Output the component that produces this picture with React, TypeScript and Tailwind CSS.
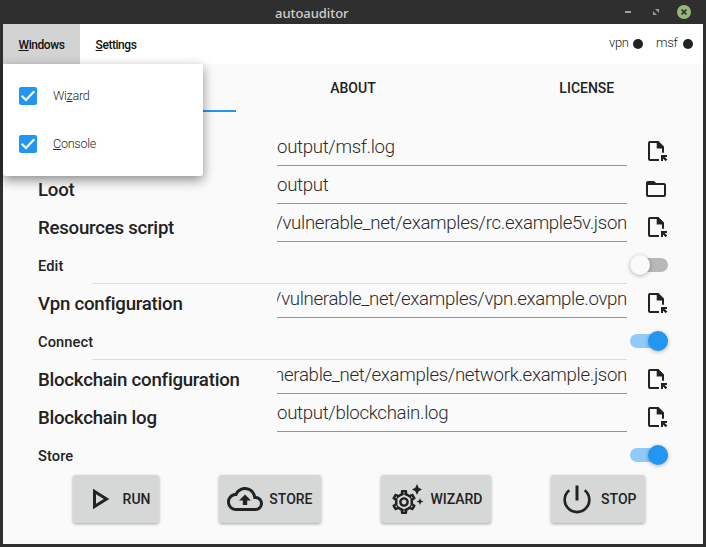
import type { ReactNode } from "react";
import { MdOutlineSettings } from "react-icons/md";

const INK = "#222222";

function FileIcon() {
  return (
    <svg width="24" height="24" viewBox="0 0 24 24" fill="none" aria-hidden="true">
      <path d="M15 21H6Q5 21 5 20V4Q5 3 6 3H14" stroke={INK} strokeWidth="2" />
      <path d="M12.700 2H14.500L20 7.500V13.700H18V9.500H12.700Z" fill={INK} />
      <path d="M17 16H23V18H20.700L23.300 20.600L21.700 22.200L19 19.600V22H17Z" fill={INK} />
    </svg>
  );
}

function FolderIcon() {
  return (
    <svg width="24" height="24" viewBox="0 0 24 24" aria-hidden="true">
      <path
        fill={INK}
        d="M20 6h-8l-2-2H4c-1.100 0-1.990.9-1.990 2L2 18c0 1.100.9 2 2 2h16c1.100 0 2-.9 2-2V8c0-1.100-.9-2-2-2zm0 12H4V8h16v10z"
      />
    </svg>
  );
}

function Toggle({ on }: { on: boolean }) {
  return (
    <div className={`flex h-[14px] w-[38px] items-center rounded-full ${on ? "justify-end bg-[#90caf9]" : "bg-[#b8b8b8]"}`}>
      <div
        className={`size-5 rounded-full shadow-[0_1px_4px_rgba(0,0,0,0.3)] ${on ? "bg-[#2196f3]" : "bg-[#fafafa]"}`}
      />
    </div>
  );
}

function Field({ label, value, end, folder }: { label: string; value: string; end?: boolean; folder?: boolean }) {
  return (
    <div className="flex h-[38px] shrink-0">
      <div className="w-[239px] pt-px text-[18.67px] leading-[38px] font-medium tracking-[-0.25px] whitespace-nowrap">
        {label}
      </div>
      <div
        className={`flex h-[34px] w-[350px] overflow-hidden border-b border-[#949494] text-[18.67px] leading-[31px] font-light tracking-[-0.33px] whitespace-nowrap text-[#2a2a2a] ${end ? "justify-end" : ""}`}
      >
        <span>{value}</span>
      </div>
      <div className="ml-[17px] flex items-center">{folder ? <FolderIcon /> : <FileIcon />}</div>
    </div>
  );
}

function SwitchRow({ label, on, divider }: { label: string; on: boolean; divider?: boolean }) {
  return (
    <div className="flex h-[38px] shrink-0">
      <div className="w-[54px] pt-px text-[14.67px] leading-[38px] font-medium tracking-[0.1px] whitespace-nowrap">{label}</div>
      <div className={`w-[535px] ${divider ? "border-b border-[#dcdcdc]" : ""}`} />
      <div className="ml-[3px] flex items-center">
        <Toggle on={on} />
      </div>
    </div>
  );
}

function ActionButton({ className, label, children }: { className: string; label: string; children: ReactNode }) {
  return (
    <button
      className={`flex h-12 shrink-0 items-center justify-between rounded-[3px] bg-[#d6d8d7] pr-[8.5px] pl-2 text-[14px] font-medium shadow-[0_1px_3px_rgba(0,0,0,0.35)] ${className}`}
    >
      {children}
      <span className="pt-px">{label}</span>
    </button>
  );
}

function MenuCheck({ children }: { children: ReactNode }) {
  return (
    <div className="flex h-12 items-center gap-4 pl-4 text-[12.67px] font-light tracking-[-0.3px] text-[#2a2a2a]">
      <div className="flex size-[18px] items-center justify-center rounded-[2px] bg-[#2196f3]">
        <svg width="18" height="18" viewBox="0 0 18 18" fill="none" aria-hidden="true">
          <path d="M2.700 8.700L7 13L15.300 4.200" stroke="#fff" strokeWidth="2.200" />
        </svg>
      </div>
      <span className="pb-[2px]">{children}</span>
    </div>
  );
}

function Key({ children }: { children: ReactNode }) {
  return <span className="underline decoration-1 underline-offset-1">{children}</span>;
}

export default function App() {
  return (
    <div className="flex h-[547px] w-[706px] flex-col bg-[#2f2f2f] px-[3px] pb-[3px] font-[Roboto,'Noto_Sans',sans-serif] text-[#222222]">
      <header className="flex h-6 shrink-0 items-center">
        <span className="mt-[3px] ml-[272px] font-['Noto_Sans',sans-serif] text-[13px] font-medium tracking-[-0.05px] text-[#cfcfcf]">
          autoauditor
        </span>
        <div className="mr-[12px] ml-auto flex items-center">
          <div className="mr-[22px] h-[2px] w-[6px] bg-[#a0a0a0]" />
          <svg className="mr-[18px]" width="6" height="6" viewBox="0 0 6 6" aria-hidden="true">
            <path d="M2 0H6V4ZM0 2V6H4Z" fill="#999" />
          </svg>
          <svg width="14" height="14" viewBox="0 0 14 14" aria-hidden="true">
            <circle cx="7" cy="7" r="7" fill="#98b877" />
            <path d="M4.500 4.500L9.500 9.500M9.500 4.500L4.500 9.500" stroke="#2f2f2f" strokeWidth="1.700" />
          </svg>
        </div>
      </header>

      <nav className="relative flex h-10 shrink-0 bg-white text-[12px] font-normal tracking-[-0.3px] text-[#111]">
        <div className="flex w-[77px] items-center justify-center bg-[#d3d3d3]">
          <span className="pt-px font-medium tracking-[-0.45px]"><Key>W</Key>indows</span>
        </div>
        <div className="flex w-[72px] items-center justify-center">
          <span className="pt-px font-medium tracking-[-0.45px]"><Key>S</Key>ettings</span>
        </div>
        <div className="ml-auto flex items-center pr-[10px] text-[13px] font-light text-[#222]">
          <span className="mb-[3px] w-[24px]">vpn</span>
          <span className="size-[10px] rounded-full bg-[#222]" />
          <span className="mb-[3px] ml-[13px] w-[27px]">msf</span>
          <span className="size-[10px] rounded-full bg-[#222]" />
        </div>
        <div className="absolute top-10 left-0 z-10 h-28 w-[200px] rounded-b-[3px] bg-white py-2 shadow-[0_4px_12px_rgba(0,0,0,0.45)]">
          <MenuCheck>Wi<Key>z</Key>ard</MenuCheck>
          <MenuCheck><Key>C</Key>onsole</MenuCheck>
        </div>
      </nav>

      <main className="flex flex-1 flex-col bg-[#fafafa]">
        <div className="grid h-12 shrink-0 grid-cols-3 text-center text-[14px] leading-[49px] font-medium">
          <div className="h-12 border-b-2 border-[#2196f3]" />
          <div className="h-12">ABOUT</div>
          <div className="h-12 pl-px">LICENSE</div>
        </div>

        <section className="mt-5 flex flex-col pl-[35px]">
          <Field label="" value="output/msf.log" />
          <Field label="Loot" value="output" folder />
          <Field label="Resources script" value="/vulnerable_net/examples/rc.example5v.json" end />
          <SwitchRow label="Edit" on={false} divider />
          <Field label="Vpn configuration" value="/vulnerable_net/examples/vpn.example.ovpn" end />
          <SwitchRow label="Connect" on divider />
          <Field label="Blockchain configuration" value="vulnerable_net/examples/network.example.json" end />
          <Field label="Blockchain log" value="output/blockchain.log" />
          <SwitchRow label="Store" on />
        </section>

        <footer className="mt-px flex pl-[70px]">
          <ActionButton className="w-[86px]" label="RUN">
            <svg width="36" height="36" viewBox="0 0 36 36" fill="none" aria-hidden="true">
              <path d="M13.500 10.500V25.500L25.500 18Z" stroke={INK} strokeWidth="3" />
            </svg>
          </ActionButton>
          <ActionButton className="ml-[60px] w-[102px]" label="STORE">
            <svg width="36" height="36" viewBox="0 0 24 24" fill={INK} aria-hidden="true">
              <path d="M19.350 10.040C18.670 6.590 15.640 4 12 4 9.110 4 6.600 5.640 5.350 8.040 2.340 8.360 0 10.910 0 14c0 3.310 2.690 6 6 6h13c2.760 0 5-2.240 5-5 0-2.640-2.050-4.780-4.650-4.960zM19 18H6c-2.210 0-4-1.790-4-4 0-2.050 1.530-3.760 3.560-3.970l1.070-.11.5-.95C8.080 7.140 9.940 6 12 6c2.620 0 4.880 1.860 5.390 4.430l.3 1.500 1.530.11c1.560.1 2.780 1.410 2.780 2.960 0 1.650-1.350 3-3 3z" />
              <path d="M8 13h2.550v3h2.900v-3H16l-4-4z" />
            </svg>
          </ActionButton>
          <ActionButton className="ml-[60px] w-[110px]" label="WIZARD">
            <svg width="36" height="36" viewBox="0 0 36 36" fill="none" aria-hidden="true">
              <MdOutlineSettings x="0.6" y="6.6" size={28.8} color={INK} />
              <circle cx="15" cy="21" r="8" stroke={INK} strokeWidth="1.500" />
              <path d="M28 3L29.700 6.800L33 8.500L29.700 10.200L28 14L26.300 10.200L23 8.500L26.300 6.800Z" fill={INK} />
              <path d="M31 17L32 19.500L34.500 20.500L32 21.500L31 24L30 21.500L27.500 20.500L30 19.500Z" fill={INK} />
            </svg>
          </ActionButton>
          <ActionButton className="ml-[60px] w-[94px]" label="STOP">
            <svg width="36" height="36" viewBox="0 0 36 36" fill="none" stroke={INK} aria-hidden="true">
              <path d="M18 4.500V19.500" strokeWidth="3" />
              <path d="M10.300 9.200A12.300 12.300 0 1 0 25.700 9.200" strokeWidth="2.600" />
            </svg>
          </ActionButton>
        </footer>
      </main>
    </div>
  );
}
